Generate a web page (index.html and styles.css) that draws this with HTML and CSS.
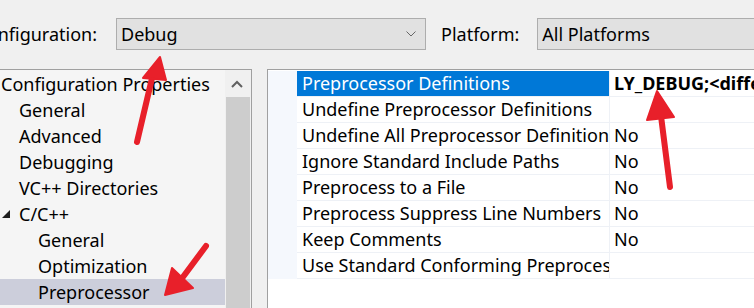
FILE: index.html
```html
<!DOCTYPE html>
<html lang="en">
  <head>
    <meta charset="UTF-8" />
    <meta name="viewport" content="width=device-width, initial-scale=1.0" />
    <title>Property Pages</title>
    <link rel="stylesheet" href="styles.css">
  </head>
  <body>
    <div class="toolbar">
      <div class="cut-label"><span>Configuration:</span></div>
      <div class="combo combo-config">
        <span>Debug</span>
        <svg class="chevron" width="10" height="6" viewBox="0 0 10 6"><path d="M0.5 0.5 L5 5 L9.5 0.5" fill="none" stroke="#666" stroke-width="1"/></svg>
      </div>
      <span class="label">Platform:</span>
      <div class="combo combo-platform"><span>All Platforms</span></div>
    </div>

    <div class="panels">
      <div class="tree">
        <ul class="tree-list">
          <li class="lvl0">Configuration Properties</li>
          <li class="lvl1">General</li>
          <li class="lvl1">Advanced</li>
          <li class="lvl1">Debugging</li>
          <li class="lvl1">VC++ Directories</li>
          <li class="lvl1 open">
            <svg class="expander" width="8" height="8" viewBox="0 0 8 8"><polygon points="8,0 8,8 0,8" fill="#1e1e1e"/></svg>
            C/C++
          </li>
          <li class="lvl2">General</li>
          <li class="lvl2">Optimization</li>
          <li class="lvl2 selected">Preprocessor</li>
        </ul>
        <div class="scrollbar">
          <div class="scroll-up">
            <svg width="12" height="8" viewBox="0 0 12 8"><path d="M1 7 L6 2 L11 7" fill="none" stroke="#606060" stroke-width="2"/></svg>
          </div>
          <div class="thumb"></div>
        </div>
      </div>

      <div class="grid">
        <div class="row">
          <div class="gutter"></div>
          <div class="name active">Preprocessor Definitions</div>
          <div class="value bold">LY_DEBUG;&lt;different options&gt;</div>
        </div>
        <div class="row">
          <div class="gutter"></div>
          <div class="name">Undefine Preprocessor Definitions</div>
          <div class="value"></div>
        </div>
        <div class="row">
          <div class="gutter"></div>
          <div class="name">Undefine All Preprocessor Definitions</div>
          <div class="value">No</div>
        </div>
        <div class="row">
          <div class="gutter"></div>
          <div class="name">Ignore Standard Include Paths</div>
          <div class="value">No</div>
        </div>
        <div class="row">
          <div class="gutter"></div>
          <div class="name">Preprocess to a File</div>
          <div class="value">No</div>
        </div>
        <div class="row">
          <div class="gutter"></div>
          <div class="name">Preprocess Suppress Line Numbers</div>
          <div class="value">No</div>
        </div>
        <div class="row">
          <div class="gutter"></div>
          <div class="name">Keep Comments</div>
          <div class="value">No</div>
        </div>
        <div class="row">
          <div class="gutter"></div>
          <div class="name">Use Standard Conforming Preprocessor</div>
          <div class="value"></div>
        </div>
      </div>
    </div>

    <!-- red annotation arrows drawn over the screenshot -->
    <svg class="marks" width="754" height="308" viewBox="0 0 754 308">
      <g stroke="#e8202a" stroke-width="6" stroke-linecap="round" fill="#e8202a">
        <line x1="137" y1="142" x2="153" y2="74"/>
        <polygon points="160,57 143,78 166,80" stroke-width="2" stroke-linejoin="round"/>
        <line x1="206" y1="246" x2="180" y2="281"/>
        <polygon points="165,295 172,268 193,288" stroke-width="2" stroke-linejoin="round"/>
        <line x1="670" y1="187" x2="661" y2="116"/>
        <polygon points="657,91 647,120 674,117" stroke-width="2" stroke-linejoin="round"/>
      </g>
    </svg>
  </body>
</html>
```

FILE: styles.css
```css
html, body {
  margin: 0;
  padding: 0;
}
body {
  width: 754px;
  height: 308px;
  overflow: hidden;
  position: relative;
  background: #f0f0f0;
  color: #000;
  font-family: "Noto Sans", "Open Sans", sans-serif;
  font-size: 18px;
}

/* top bar */
.toolbar {
  display: flex;
  align-items: center;
  padding-top: 18px;
  height: 32px;
  margin-bottom: 19px;
  white-space: nowrap;
}
.cut-label {
  width: 97px;
  display: flex;
  justify-content: flex-end;
  margin-right: 19px;
}
.combo {
  box-sizing: border-box;
  height: 32px;
  border: 1px solid #adadad;
  background: #e1e1e1;
  display: flex;
  align-items: center;
  padding-left: 4px;
}
.combo-config {
  width: 310px;
  justify-content: space-between;
  padding-right: 9px;
}
.combo-platform {
  flex: 1;
  margin-right: -40px;
}
.label {
  margin-left: 15px;
  margin-right: 18px;
}

/* lower panels */
.panels {
  display: flex;
  height: 239px;
}
.tree {
  box-sizing: border-box;
  width: 253px;
  border-top: 1px solid #a0a0a0;
  border-right: 1px solid #a0a0a0;
  background: #f5f5f5;
  display: flex;
}
.tree-list {
  list-style: none;
  margin: 0;
  padding: 1px 0 0 0;
  width: 225px;
}
.tree-list li {
  height: 26px;
  line-height: 26px;
  white-space: nowrap;
  position: relative;
}
.lvl0 { padding-left: 1px; }
.lvl1 { padding-left: 19px; }
.lvl2 { padding-left: 38px; }
.tree-list .selected {
  background: #cccedb;
}
.expander {
  position: absolute;
  left: 2px;
  top: 9px;
}
.scrollbar {
  width: 26px;
  background: #f0f0f0;
  display: flex;
  flex-direction: column;
}
.scroll-up {
  height: 27px;
  display: flex;
  align-items: center;
  justify-content: center;
  padding-right: 2px;
}
.thumb {
  flex: 1;
  width: 24px;
  margin-left: 1px;
  background: #cdcdcd;
}

.grid {
  flex: 1;
  margin-left: 15px;
  border-top: 1px solid #a0a0a0;
  border-left: 1px solid #a0a0a0;
  background: #fff;
  padding-top: 1px;
  margin-right: -40px;
}
.row {
  display: flex;
  height: 26px;
  line-height: 25px;
  box-sizing: border-box;
  border-bottom: 1px solid #eef1f6;
}
.gutter {
  width: 29px;
  background: #f5f8fd;
  margin-bottom: -1px;
}
.name {
  box-sizing: border-box;
  width: 313px;
  padding-left: 5px;
  border-right: 1px solid #eef1f6;
  white-space: nowrap;
  overflow: hidden;
}
.name.active {
  background: #0078d7;
  color: #fff;
}
.value {
  flex: 1;
  padding-left: 4px;
  white-space: nowrap;
  overflow: hidden;
}
.value.bold {
  font-weight: 700;
}

.marks {
  position: absolute;
  left: 0;
  top: 0;
}
```
